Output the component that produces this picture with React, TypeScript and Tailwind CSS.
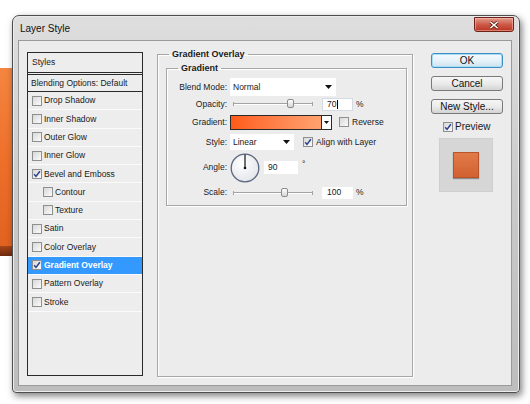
import React from 'react';

const Check = ({ checked = false }: { checked?: boolean }) => (
  <span className="flex h-[10px] w-[10px] shrink-0 items-center justify-center border border-[#8e8f8f] bg-gradient-to-br from-[#d8d8d8] to-[#fbfbfb]">
    {checked && (
      <svg width="8" height="8" viewBox="0 0 8 8">
        <path d="M1.2 4.2 L3 6.4 L6.9 1.2" fill="none" stroke="#2b3f8c" strokeWidth="1.5" />
      </svg>
    )}
  </span>
);

const Arrow = () => (
  <svg width="7" height="4" viewBox="0 0 7 4">
    <path d="M0 0h7L3.5 4z" fill="#111" />
  </svg>
);

const Slider = ({ thumb }: { thumb: string }) => (
  <div className="relative h-[12px] w-[80px]">
    <div className="absolute left-0 right-0 top-[5px] h-[2px] border-t border-b border-t-[#a3a3a3] border-b-white" />
    <div className="absolute left-0 top-[4px] h-[4px] w-px bg-[#a3a3a3]" />
    <div className="absolute right-0 top-[4px] h-[4px] w-px bg-[#a3a3a3]" />
    <div className={`absolute top-[1px] h-[9px] w-[7px] rounded-[2px] border border-[#8c8c8c] bg-gradient-to-b from-white to-[#d6d6d6] ${thumb}`} />
  </div>
);

const Btn = ({ label, focus = false }: { label: string; focus?: boolean }) => (
  <button
    className={`flex h-[15px] w-[72px] items-center justify-center rounded-[3px] border bg-gradient-to-b text-[10px] leading-none text-[#111] ${
      focus
        ? 'border-[#3c8fc4] from-[#f4fafd] via-[#e6f2f9] to-[#cfe3ef] shadow-[inset_0_0_0_1px_#a9dcf6]'
        : 'border-[#7a7a7a] from-[#f6f6f6] via-[#ebebeb] to-[#d3d3d3]'
    }`}
  >
    {label}
  </button>
);

const styleRows: { label: string; checked?: boolean; indent?: boolean; active?: boolean }[] = [
  { label: 'Drop Shadow' },
  { label: 'Inner Shadow' },
  { label: 'Outer Glow' },
  { label: 'Inner Glow' },
  { label: 'Bevel and Emboss', checked: true },
  { label: 'Contour', indent: true },
  { label: 'Texture', indent: true },
  { label: 'Satin' },
  { label: 'Color Overlay' },
  { label: 'Gradient Overlay', checked: true, active: true },
  { label: 'Pattern Overlay' },
  { label: 'Stroke' },
];

export default function App() {
  return (
    <div className="relative h-[404px] w-[530px] overflow-hidden bg-white pl-[12px] pt-[15px] font-['Liberation_Sans',Arial,sans-serif] text-[8.5px] leading-none text-[#1a1a1a]">
      {/* orange artwork behind the dialog */}
      <div className="absolute left-0 top-[68px] flex h-[188px] w-[60px] flex-col bg-gradient-to-b from-[#f5853f] via-[#ee6f2a] to-[#e0601e]">
        <div className="flex-1" />
        <div className="h-[10px] bg-gradient-to-b from-[#a8461a] to-[#6e2a0e]" />
      </div>

      {/* window */}
      <div className="relative z-10 flex h-[378px] w-[508px] flex-col rounded-t-[7px] rounded-b-[4px] border border-[#4e4e4e] bg-gradient-to-b from-[#dedede] via-[#c9c9c9] to-[#bdbdbd] shadow-[2px_3px_7px_rgba(0,0,0,0.5),inset_0_0_0_1px_#ececec]">
        {/* title bar */}
        <div className="flex h-[24px] items-start justify-between pl-[7px] pr-[5px]">
          <span className="mt-[8px] text-[10px] text-[#111]">Layer Style</span>
          <div className="mt-[1px] flex h-[15px] w-[40px] items-center justify-center rounded-b-[3px] border border-[#6e2217] bg-gradient-to-b from-[#e39c8c] via-[#cd5a48] to-[#b8331f] shadow-[inset_0_0_0_1px_rgba(255,200,190,0.5)]">
            <svg width="10" height="8" viewBox="0 0 10 8">
              <path d="M1.5 1 L8.5 7 M8.5 1 L1.5 7" stroke="#5a1a10" strokeWidth="3" />
              <path d="M1.5 1 L8.5 7 M8.5 1 L1.5 7" stroke="#fff" strokeWidth="1.6" />
            </svg>
          </div>
        </div>

        {/* client area */}
        <div className="ml-[5px] flex h-[346px] w-[494px] items-start border border-[#9a9a9a] bg-[#ececec] pl-[8px]">
          {/* styles list */}
          <div className="mt-[11px] flex h-[324px] w-[116px] flex-col border border-[#2a2a2a] bg-[#ededed]">
            <div className="flex h-[20px] items-center border-b border-[#2a2a2a] pl-[4px]">Styles</div>
            <div className="mt-[1px] flex h-[18px] items-center border-y border-[#2a2a2a] pl-[3px]">Blending Options: Default</div>
            {styleRows.map((r) => (
              <div
                key={r.label}
                className={`flex h-[18.3px] items-center gap-[2px] border-b border-[#fafafa] ${r.indent ? 'pl-[15px]' : 'pl-[4px]'} ${
                  r.active ? 'bg-[#3399ff] font-bold text-white' : ''
                }`}
              >
                <Check checked={r.checked} />
                <span>{r.label}</span>
              </div>
            ))}
          </div>

          {/* Gradient Overlay group */}
          <fieldset className="ml-[14px] mt-[8px] h-[328px] w-[256px] border border-[#a6a6a6] pl-[8px] pr-[5px] shadow-[inset_1px_1px_0_#fff,1px_1px_0_#fff]">
            <legend className="ml-[3px] px-[3px] text-[9px] font-bold leading-[11px]">Gradient Overlay</legend>
            <fieldset className="mt-[3px] border border-[#a6a6a6] pb-[6px] shadow-[inset_1px_1px_0_#fff,1px_1px_0_#fff]">
              <legend className="ml-[11px] px-[3px] text-[9px] font-bold leading-[11px]">Gradient</legend>

              <div className="mt-[4px] flex h-[18px] items-center">
                <span className="w-[60px] text-right">Blend Mode:</span>
                <div className="ml-[3px] flex h-[18px] w-[106px] items-center justify-between bg-white pl-[3px] pr-[4px]">
                  <span>Normal</span>
                  <Arrow />
                </div>
              </div>

              <div className="mt-[1px] flex h-[14px] items-center">
                <span className="w-[60px] text-right">Opacity:</span>
                <div className="ml-[6px]">
                  <Slider thumb="left-[54px]" />
                </div>
                <div className="ml-[9px] flex h-[13px] w-[31px] items-center border border-[#d4dae2] bg-white pl-[4px]">
                  <span>70</span>
                  <span className="ml-px h-[9px] w-px bg-black" />
                </div>
                <span className="ml-[3px]">%</span>
              </div>

              <div className="mt-[3px] flex h-[16px] items-center">
                <span className="w-[60px] text-right">Gradient:</span>
                <div className="ml-[3px] flex h-[15px] w-[102px] border border-[#2a2a2a] bg-white">
                  <div className="flex-1 border-r border-[#2a2a2a] bg-gradient-to-r from-[#ff5a14] to-[#ffa26f]" />
                  <div className="flex w-[9px] items-center justify-center">
                    <svg width="5" height="3" viewBox="0 0 5 3">
                      <path d="M0 0h5L2.5 3z" fill="#111" />
                    </svg>
                  </div>
                </div>
                <span className="ml-[7px]">
                  <Check />
                </span>
                <span className="ml-[3px]">Reverse</span>
              </div>

              <div className="mt-[4px] flex h-[16px] items-center">
                <span className="w-[60px] text-right">Style:</span>
                <div className="ml-[3px] flex h-[16px] w-[64px] items-center justify-between bg-white pl-[3px] pr-[4px]">
                  <span>Linear</span>
                  <Arrow />
                </div>
                <span className="ml-[9px]">
                  <Check checked />
                </span>
                <span className="ml-[3px]">Align with Layer</span>
              </div>

              <div className="mt-[3px] flex h-[29px] items-center">
                <span className="w-[60px] text-right">Angle:</span>
                <svg className="ml-[3px]" width="30" height="30" viewBox="0 0 30 30">
                  <defs>
                    <radialGradient id="dial" cx="0.4" cy="0.35" r="0.7">
                      <stop offset="0" stopColor="#ffffff" />
                      <stop offset="1" stopColor="#e2e4e8" />
                    </radialGradient>
                  </defs>
                  <circle cx="15" cy="15" r="13.8" fill="url(#dial)" stroke="#5b6680" strokeWidth="1.3" />
                  <path d="M15 15 V1.5" stroke="#111" strokeWidth="1.2" />
                  <circle cx="15" cy="15" r="1.3" fill="#111" />
                </svg>
                <div className="ml-[4px] flex h-[13px] w-[34px] items-center bg-white pl-[4px]">90</div>
                <span className="mb-[6px] ml-[4px]">°</span>
              </div>

              <div className="mt-[4px] flex h-[13px] items-center">
                <span className="w-[60px] text-right">Scale:</span>
                <div className="ml-[6px]">
                  <Slider thumb="left-[48px]" />
                </div>
                <div className="ml-[9px] flex h-[12px] w-[31px] items-center bg-white pl-[5px]">100</div>
                <span className="ml-[3px]">%</span>
              </div>
            </fieldset>
          </fieldset>

          {/* buttons */}
          <div className="ml-[18px] mt-[12px] flex flex-col">
            <Btn label="OK" focus />
            <div className="mt-[8px]">
              <Btn label="Cancel" />
            </div>
            <div className="mt-[8px]">
              <Btn label="New Style..." />
            </div>
            <div className="ml-[12px] mt-[8px] flex h-[10px] items-center gap-[2px] text-[10px]">
              <Check checked />
              <span>Preview</span>
            </div>
            <div className="ml-[8px] mt-[6px] flex h-[54px] w-[54px] items-center justify-center border border-[#cfcfcf] bg-[#d6d6d6]">
              <div className="h-[26px] w-[26px] border border-[#b9532a] bg-gradient-to-b from-[#e27a4a] to-[#d2612f] shadow-[0_1px_1px_rgba(0,0,0,0.35)]" />
            </div>
          </div>
        </div>
      </div>
    </div>
  );
}
